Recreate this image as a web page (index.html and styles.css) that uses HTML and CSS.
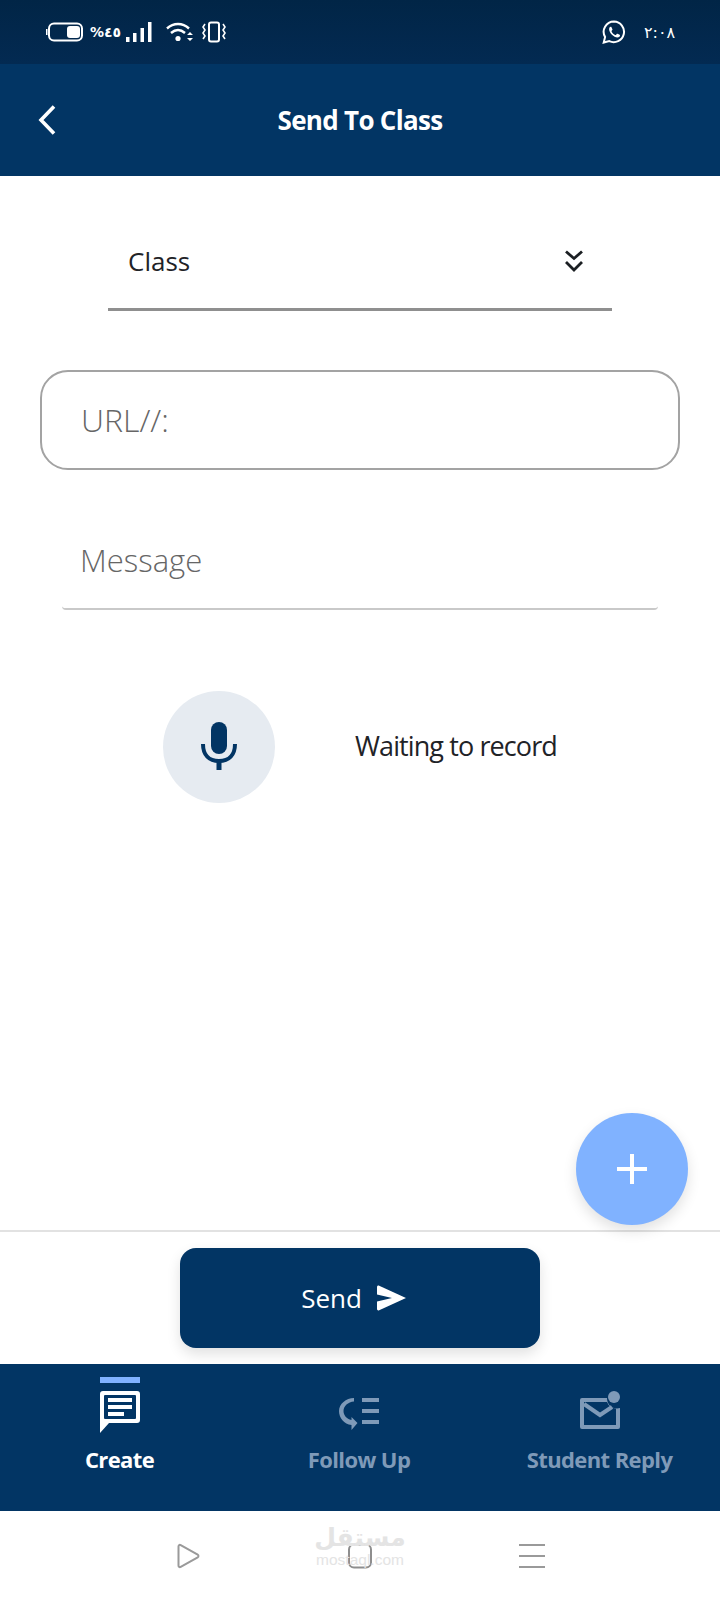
FILE: index.html
```html
<!DOCTYPE html>
<html lang="en">
<head>
<meta charset="utf-8">
<title>Send To Class</title>
<link rel="stylesheet" href="styles.css">
</head>
<body>
<div class="app">
  <div class="status">
    <div class="status-left">
      <svg class="ic-battery" width="38" height="20" viewBox="0 0 38 20"><rect x="0" y="7" width="1.5" height="6" fill="#fff"/><rect x="3" y="1.5" width="33" height="17" rx="5" fill="none" stroke="#fff" stroke-width="2"/><rect x="21" y="4" width="13" height="12" rx="3" fill="#fff"/></svg>
      <span class="status-pct">%٤٥</span>
      <svg class="ic-signal" width="26" height="22" viewBox="0 0 26 22"><rect x="0" y="16" width="3.5" height="5" fill="#fff"/><rect x="7" y="12" width="3.5" height="9" fill="#fff"/><rect x="14.5" y="7" width="3.5" height="14" fill="#fff"/><rect x="22" y="1" width="3.5" height="20" fill="#fff"/></svg>
      <svg class="ic-wifi" width="28" height="22" viewBox="0 0 28 22"><g fill="none" stroke="#fff" stroke-width="2.4"><path d="M1 7.5C7.5 1.5 16.5 1.5 23 7.5"/><path d="M5 12C9.5 8 14.5 8 19 12"/></g><circle cx="12" cy="17.5" r="2.6" fill="#fff"/><path d="M21 14l3-3 3 3zM21 17l3 3 3-3z" fill="#fff"/></svg>
      <svg class="ic-vibrate" width="24" height="22" viewBox="0 0 24 22"><rect x="7" y="1.5" width="10" height="19" rx="2" fill="none" stroke="#fff" stroke-width="2"/><g fill="none" stroke="#fff" stroke-width="1.6"><path d="M3 3l-2 3 2 3-2 3 2 3-2 3"/><path d="M21 3l2 3-2 3 2 3-2 3 2 3"/></g></svg>
    </div>
    <div class="status-right">
      <svg width="24" height="24" viewBox="0 0 24 24"><path d="M12 1.5a10.3 10.3 0 0 0-8.9 15.5L1.7 22.500l5.600-1.400A10.300 10.300 0 1 0 12 1.500z" fill="none" stroke="#fff" stroke-width="2"/><path d="M8.600 6.800c-.5 0-1.500.8-1.500 2.500 0 3.500 4.800 8.300 8.300 8.300 1.800 0 2.600-1.200 2.600-2 0-.4-.1-.6-.4-.8l-2.100-1c-.4-.2-.6 0-.8.3l-.7.9c-.2.200-.4.200-.7.100-1.500-.7-2.900-2-3.700-3.600-.1-.3 0-.5.100-.7l.6-.8c.2-.2.200-.4.100-.7l-.9-2.100c-.2-.4-.4-.4-.9-.4z" fill="#fff"/></svg>
      <span class="status-time">٢:٠٨</span>
    </div>
  </div>

  <header class="header">
    <svg class="back" width="20" height="32" viewBox="0 0 20 32"><path d="M17 2.500L4 16l13 13.500" fill="none" stroke="#fff" stroke-width="3.600"/></svg>
    <h1 class="title">Send To Class</h1>
  </header>

  <main class="main">
    <div class="select">
      <span class="select-label">Class</span>
      <svg width="20" height="24" viewBox="0 0 20 24"><g fill="none" stroke="#1b1f23" stroke-width="2.800"><path d="M2 2.500l8 7 8-7"/><path d="M2 13l8 8 8-8"/></g></svg>
    </div>
    <div class="url">URL//:</div>
    <div class="message">Message</div>
    <div class="record">
      <div class="mic">
        <svg class="mic-icon" width="36" height="48" viewBox="0 0 36 48"><rect x="10" y="0" width="16" height="32" rx="8" fill="#023564"/><path d="M2 22c0 11 6 17 16 17s16-6 16-17" fill="none" stroke="#023564" stroke-width="4"/><rect x="15.500" y="38" width="5" height="10" fill="#023564"/></svg>
      </div>
      <span class="record-label">Waiting to record</span>
    </div>
    <div class="fab">
      <svg width="30" height="30" viewBox="0 0 30 30"><path d="M0 15h30M15 0v30" stroke="#fff" stroke-width="4"/></svg>
    </div>
  </main>

  <div class="send-area">
    <button class="send" type="button">
      <span>Send</span>
      <svg class="send-icon" width="31" height="26" viewBox="0 0 31 26"><path d="M1 2.200C1 .8 2 .2 3.200.7L30 13 3.200 25.300C2 25.800 1 25.200 1 23.800V16.500L16 13 1 9.500z" fill="#fff"/></svg>
    </button>
  </div>

  <nav class="tabs">
    <div class="tab tab-active">
      <span class="tab-bar"></span>
      <svg class="tab-icon" width="40" height="42" viewBox="0 0 40 42"><path d="M3 0h34a3 3 0 0 1 3 3v26a3 3 0 0 1-3 3H9L0 42V3a3 3 0 0 1 3-3z" fill="#fff"/><rect x="4" y="4" width="32" height="24" rx="1" fill="#023564"/><rect x="8" y="7" width="24" height="4" fill="#fff"/><rect x="8" y="14" width="24" height="4" fill="#fff"/><rect x="8" y="21" width="16" height="4" fill="#fff"/></svg>
      <span class="tab-label">Create</span>
    </div>
    <div class="tab">
      <span class="tab-gap"></span>
      <svg class="tab-icon" width="40" height="42" viewBox="0 0 40 42"><g fill="#7f9ab8"><rect x="23" y="7" width="17" height="4"/><rect x="23" y="18" width="17" height="4"/><rect x="23" y="29" width="17" height="4"/><path d="M15 7v3.500C9 11 4.500 15 4.500 20c0 4 3 8 8 9v-3l6 6-6 7v-5C5 33 0 27 0 20 0 13 7 7 15 7z"/></g></svg>
      <span class="tab-label">Follow Up</span>
    </div>
    <div class="tab">
      <span class="tab-gap"></span>
      <svg class="tab-icon" width="40" height="42" viewBox="0 0 40 42"><path d="M2 7h25a10 10 0 0 0 13 10v19a2 2 0 0 1-2 2H2a2 2 0 0 1-2-2V9a2 2 0 0 1 2-2z" fill="#7f9ab8"/><path d="M4 11h23a10 10 0 0 0 9 6.500V34H4z" fill="#023564"/><path d="M4 13l16 11 12-8" fill="none" stroke="#7f9ab8" stroke-width="4"/><circle cx="34" cy="6" r="6" fill="#7f9ab8"/></svg>
      <span class="tab-label">Student Reply</span>
    </div>
  </nav>

  <div class="sysnav">
    <svg width="26" height="26" viewBox="0 0 26 26"><path d="M3.500 3.500c0-1.500 1-2 2.200-1.300l17 9.500c1 .6 1 2 0 2.600l-17 9.500c-1.200.7-2.200.2-2.200-1.300z" fill="none" stroke="#9a9a9a" stroke-width="2"/></svg>
    <div class="watermark"><span class="wm-ar">مستقل</span><span class="wm-en">mostaql.com</span></div>
    <svg class="sys-home" width="26" height="26" viewBox="0 0 26 26"><rect x="2" y="1.500" width="22" height="23" rx="5" fill="none" stroke="#8e8e8e" stroke-width="2"/></svg>
    <svg width="26" height="26" viewBox="0 0 26 26"><path d="M0 2h26M0 13h26M0 24h26" stroke="#9a9a9a" stroke-width="2"/></svg>
  </div>
</div>
</body>
</html>
```
FILE: styles.css
```css
* { box-sizing: border-box; }
html, body { margin: 0; padding: 0; background: #fff; }
body { font-family: "Open Sans", Roboto, sans-serif; font-stretch: 90%; color: #1f2327; }
.app { width: 720px; height: 1600px; display: flex; flex-direction: column; overflow: hidden; }

.status { height: 64px; flex: none; display: flex; justify-content: space-between; align-items: center; padding: 0 46px 0 46px; background: linear-gradient(#012546, #032a52); color: #fff; }
.status-left { display: flex; align-items: center; }
.status-pct { font-family: "DejaVu Sans", sans-serif; font-size: 14px; font-weight: 700; margin-left: 6px; width: 32px; direction: ltr; unicode-bidi: bidi-override; white-space: nowrap; }
.ic-signal { margin-left: 4px; }
.ic-wifi { margin-left: 14px; }
.ic-vibrate { margin-left: 8px; }
.status-right { display: flex; align-items: center; gap: 18px; }
.status-time { font-family: "DejaVu Sans", sans-serif; font-size: 16px; width: 30px; unicode-bidi: bidi-override; direction: ltr; }

.header { height: 112px; flex: none; background: #023564; display: flex; align-items: center; justify-content: center; position: relative; }
.back { position: absolute; left: 37px; top: 40px; }
.title { margin: 0; color: #fff; font-size: 26px; font-weight: 700; letter-spacing: -.7px; }

.main { flex: 1; position: relative; display: flex; flex-direction: column; }
.select { margin: 40px 108px 0; height: 95px; border-bottom: 3px solid #8f8f8f; display: flex; align-items: center; justify-content: space-between; padding: 0 28px 2px 20px; }
.select-label { font-size: 26px; }
.url { margin: 59px 40px 0; height: 100px; border: 2px solid #a3a3a3; border-radius: 28px; display: flex; align-items: center; padding: 0 0 2px 39px; font-size: 32px; font-weight: 300; color: #666; }
.message { margin: 43px 62px 0; height: 97px; border-bottom: 2px solid #c9c9c9; border-radius: 0 0 4px 4px; display: flex; align-items: center; padding: 0 0 2px 18px; font-size: 31px; font-weight: 300; color: #666; }
.record { margin-top: 81px; padding-left: 163px; display: flex; align-items: center; gap: 80px; }
.mic { width: 112px; height: 112px; border-radius: 50%; background: #e6ebf1; display: flex; align-items: center; justify-content: center; padding-bottom: 2px; }
.record-label { font-size: 27px; letter-spacing: -.9px; padding-bottom: 4px; }
.fab { position: absolute; right: 32px; bottom: 5px; width: 112px; height: 112px; border-radius: 50%; background: #80b2ff; display: flex; align-items: center; justify-content: center; box-shadow: 0 6px 14px rgba(0, 0, 0, .12); }

.send-area { height: 133.5px; flex: none; border-top: 2px solid #e2e2e2; display: flex; justify-content: center; padding-top: 16px; }
.send { width: 360px; height: 100px; border: 0; border-radius: 16px; background: #023564; color: #fff; font: inherit; font-stretch: 90%; font-size: 26px; display: flex; align-items: center; justify-content: center; gap: 14px; box-shadow: 0 6px 14px rgba(0, 0, 0, .12); }
.send-icon { margin-right: 12px; }

.tabs { height: 147px; flex: none; background: #023564; display: grid; grid-template-columns: 239px 240px 241px; }
.tab { display: flex; flex-direction: column; align-items: center; padding-top: 13px; color: #7f9ab8; }
.tab-active { color: #fff; }
.tab-bar { width: 40px; height: 6px; background: #80b2ff; }
.tab-gap { height: 6px; }
.tab-icon { margin-top: 8px; }
.tab-label { font-size: 22px; font-weight: 700; letter-spacing: -.6px; margin-top: 11px; white-space: nowrap; }

.sysnav { height: 89.5px; flex: none; position: relative; display: grid; grid-template-columns: 26px 26px 26px; column-gap: 146px; justify-content: center; align-items: start; padding-top: 32px; }
.sysnav svg { display: block; }
.sys-home { grid-column: 2; grid-row: 1; }
.watermark { position: absolute; left: 316px; top: 12px; width: 88px; display: flex; flex-direction: column; align-items: center; color: #e4e4e4; }
.wm-ar { font-family: "DejaVu Sans", sans-serif; font-size: 25px; font-weight: 700; line-height: 30px; }
.wm-en { font-family: "Liberation Sans", sans-serif; font-size: 15.5px; line-height: 14px; }
```
